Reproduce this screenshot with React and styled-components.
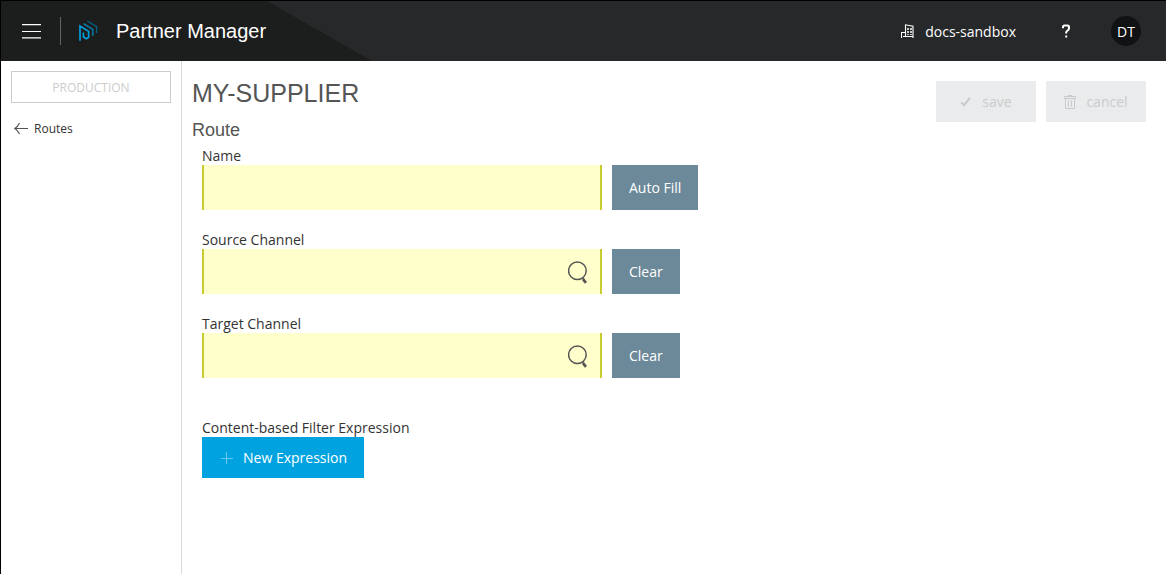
import React from "react";
import styled, { createGlobalStyle, css } from "styled-components";

const GlobalStyle = createGlobalStyle`
  * { box-sizing: border-box; }
  body {
    margin: 0;
    background: #fff;
    color: #333;
    font: 14px/19px "Open Sans", sans-serif;
  }
  button, input { font: inherit; }
  svg { display: block; flex: none; }
`;

const Page = styled.div`
  display: flex;
  flex-direction: column;
  min-height: 100vh;
  border: solid #000;
  border-width: 1px 0 0 1px;
`;

const Header = styled.header`
  display: flex;
  align-items: center;
  height: 60px;
  padding: 0 25px 0 21px;
  background: #272829;
  color: #fff;
  position: relative;
`;

const HeaderShade = styled.div`
  position: absolute;
  inset: 0 auto 0 0;
  width: 371px;
  background: #1c1e1d;
  clip-path: polygon(0 0, 266px 0, 100% 100%, 0 100%);
`;

const HeaderGroup = styled.div`
  display: flex;
  align-items: center;
  position: relative;
  margin-left: ${(p) => (p.$end ? "auto" : "0")};
`;

const PlainButton = styled.button`
  display: flex;
  align-items: center;
  padding: 0;
  border: 0;
  background: none;
  color: inherit;
  cursor: pointer;
`;

const Divider = styled.span`
  width: 1px;
  height: 28px;
  margin: 0 18px;
  background: #636564;
`;

const AppName = styled.span`
  margin-left: 17px;
  font: 20px/24px "Liberation Sans", Arial, sans-serif;
`;

const Tenant = styled(PlainButton)`
  gap: 11px;
`;

const Help = styled(PlainButton)`
  margin: 0 40px 0 45px;
`;

const Avatar = styled(PlainButton)`
  justify-content: center;
  width: 30px;
  height: 30px;
  border-radius: 50%;
  background: #111213;
`;

const Body = styled.div`
  display: flex;
  flex: 1;
`;

const Sidebar = styled.nav`
  flex: none;
  width: 181px;
  padding: 10px;
  border-right: 1px solid #d9d9d9;
  font-size: 12px;
`;

const Environment = styled.div`
  height: 32px;
  border: 1px solid #ccc;
  color: #ccc;
  line-height: 32px;
  text-align: center;
`;

const BackLink = styled.a`
  display: flex;
  align-items: center;
  gap: 6px;
  margin: 16px 3px;
  color: #333;
  text-decoration: none;
`;

const Main = styled.main`
  flex: 1;
  padding: 16px 20px 20px 10px;
`;

const TitleBar = styled.div`
  display: flex;
  justify-content: space-between;
  align-items: flex-start;
  height: 42px;
`;

const Title = styled.h1`
  margin: 0;
  color: #555;
  font: 25px/32px "Liberation Sans", Arial, sans-serif;
`;

const Subtitle = styled.h2`
  margin: 0;
  color: #555;
  font: 18px/22px "Liberation Sans", Arial, sans-serif;
`;

const Actions = styled.div`
  display: flex;
  gap: 10px;
  padding-top: 4px;
`;

const tones = {
  slate: css`background: #6b8999; color: #fff;`,
  blue: css`background: #00a3e0; color: #fff;`,
  muted: css`background: #e9ebec; color: #ccc;`,
};

const Button = styled.button`
  display: flex;
  align-items: center;
  justify-content: center;
  gap: 10px;
  height: ${(p) => (p.$tall ? 45 : 41)}px;
  min-width: ${(p) => (p.$tone === "muted" ? 100 : 0)}px;
  padding: 0 17px;
  border: 0;
  ${(p) => tones[p.$tone]}
`;

const Form = styled.form`
  display: flex;
  flex-direction: column;
  gap: 20px;
  padding: 5px 10px;
`;

const Field = styled.div`
  label { display: block; }
`;

const FilterGroup = styled.section`
  display: flex;
  flex-direction: column;
  align-items: flex-start;
  margin-top: 20px;
`;

const FieldRow = styled.div`
  display: flex;
  gap: 10px;
`;

const InputBox = styled.div`
  display: flex;
  align-items: center;
  width: 400px;
  height: 45px;
  padding-right: 12px;
  border: solid #c8cc33;
  border-width: 0 2px;
  background: #ffffcc;
`;

const TextInput = styled.input`
  flex: 1;
  min-width: 0;
  height: 100%;
  padding: 0 10px;
  border: 0;
  outline: 0;
  background: transparent;
`;

const MenuIcon = () => (
  <svg width="20" height="16" viewBox="0 0 20 16" stroke="#fff" strokeWidth="1.2">
    <path d="M0 1.6h19M0 8.5h19M0 14.8h19" />
  </svg>
);

const Logo = () => (
  <svg width="20" height="22" viewBox="0 0 20 22" fill="none">
    <path d="M1 20.8V6L9.6 11.4V17.4L7.4 18.8L4.4 17V12.6" stroke="#009fdf" strokeWidth="1.7" />
    <path d="M4.6 3.6L13.8 9.4V16" stroke="#0480b2" strokeWidth="1.4" />
    <path d="M8.4 1L17.6 6.6V13" stroke="#075f83" strokeWidth="1.4" />
  </svg>
);

const BuildingIcon = () => (
  <svg width="13" height="14" viewBox="0 0 13 14">
    <path d="M.5 14V8.5H4M4.5 12V.8L12 2.3V14M2 12.5H12" fill="none" stroke="#fff" strokeWidth="1.1" />
    <path d="M6 4h2v2h-2zM9 4h2v2h-2zM6 7h2v2h-2zM9 7h2v2h-2zM6 10h2v1h-2zM9 10h2v1h-2z" fill="#fff" fillOpacity=".75" />
  </svg>
);

const HelpIcon = () => (
  <svg width="10" height="14" viewBox="0 0 10 14" fill="none" stroke="#fff" strokeWidth="2">
    <path d="M2 4.2V3Q2 1.5 3.5 1.5H6.5Q8 1.5 8 3V4.2Q8 5.2 7.2 6L6 7Q5.2 7.6 5.2 8.8V9.5M5.2 11.4V13.6" />
  </svg>
);

const BackIcon = () => (
  <svg width="14" height="12" viewBox="0 0 14 12" fill="none" stroke="#555" strokeWidth="1.2">
    <path d="M5.5 0Q3.5 4 .8 5.5Q3.5 7 5.5 11M1 5.5H14" />
  </svg>
);

const CheckIcon = () => (
  <svg width="12" height="10" viewBox="0 0 12 10" fill="none" stroke="#c8cacb" strokeWidth="2">
    <path d="M1.2 5.5L4 8.2L10 .8" />
  </svg>
);

const TrashIcon = () => (
  <svg width="12" height="14" viewBox="0 0 12 14" fill="none" stroke="#c8cacb">
    <path d="M.5 3.5V1.5H11.5V3.5ZM4 .5H8M1.5 4V13.5H10.5V4M4.5 5.5V11.5M7.5 5.5V11.5" />
  </svg>
);

const SearchIcon = () => (
  <svg width="20" height="24" viewBox="0 0 20 24" fill="none" stroke="#555">
    <circle cx="9.4" cy="10.8" r="8.8" strokeWidth="1.5" />
    <path d="M14.5 18L15.8 19.5" strokeWidth="1.5" />
    <path d="M15 19.2L18 22.8" strokeWidth="2.8" />
  </svg>
);

const PlusIcon = () => (
  <svg width="14" height="14" viewBox="0 0 14 14" stroke="#66c8ec">
    <path d="M2 7.5H14M7.5 1V13" />
  </svg>
);

function FormField({ id, label, action, search }) {
  return (
    <Field>
      <label htmlFor={id}>{label}</label>
      <FieldRow>
        <InputBox>
          <TextInput id={id} type="text" />
          {search && (
            <PlainButton type="button" aria-label={`Search ${label}`}>
              <SearchIcon />
            </PlainButton>
          )}
        </InputBox>
        <Button type="button" $tone="slate" $tall>{action}</Button>
      </FieldRow>
    </Field>
  );
}

export default function App() {
  return (
    <>
      <GlobalStyle />
      <Page>
        <Header>
          <HeaderShade />
          <HeaderGroup>
            <PlainButton aria-label="Menu"><MenuIcon /></PlainButton>
            <Divider />
            <Logo />
            <AppName>Partner Manager</AppName>
          </HeaderGroup>
          <HeaderGroup $end>
            <Tenant><BuildingIcon />docs-sandbox</Tenant>
            <Help aria-label="Help"><HelpIcon /></Help>
            <Avatar>DT</Avatar>
          </HeaderGroup>
        </Header>
        <Body>
          <Sidebar>
            <Environment>PRODUCTION</Environment>
            <BackLink href="#routes"><BackIcon />Routes</BackLink>
          </Sidebar>
          <Main>
            <TitleBar>
              <Title>MY-SUPPLIER</Title>
              <Actions>
                <Button type="button" disabled $tone="muted"><CheckIcon />save</Button>
                <Button type="button" disabled $tone="muted"><TrashIcon />cancel</Button>
              </Actions>
            </TitleBar>
            <Subtitle>Route</Subtitle>
            <Form>
              <FormField id="name" label="Name" action="Auto Fill" />
              <FormField id="source" label="Source Channel" action="Clear" search />
              <FormField id="target" label="Target Channel" action="Clear" search />
              <FilterGroup>
                <span>Content-based Filter Expression</span>
                <Button type="button" $tone="blue"><PlusIcon />New Expression</Button>
              </FilterGroup>
            </Form>
          </Main>
        </Body>
      </Page>
    </>
  );
}
